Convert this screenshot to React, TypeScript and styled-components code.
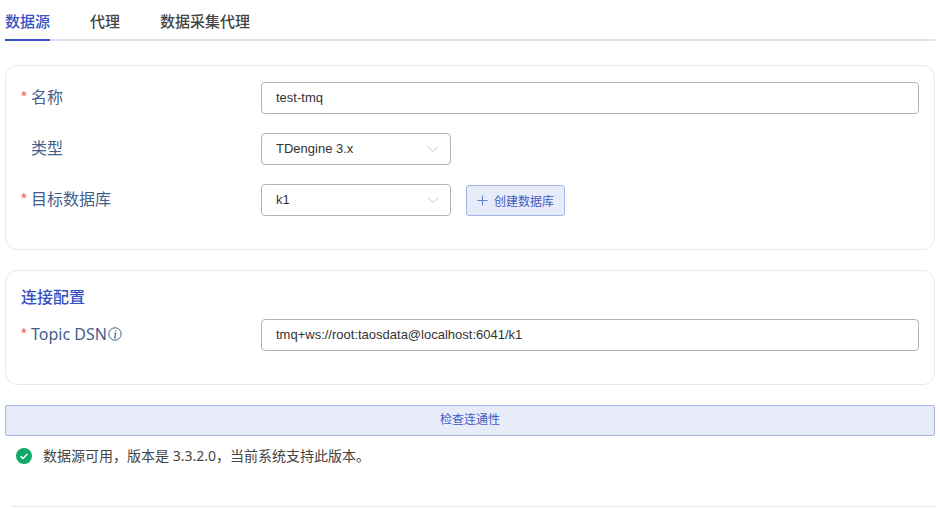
import React from 'react';
import styled, { createGlobalStyle } from 'styled-components';

const GlobalStyle = createGlobalStyle`
	html, body {
		margin: 0;
		padding: 0;
		background: #fff;
		overflow: hidden;
	}
	* {
		box-sizing: border-box;
	}
`;

const tabs = ['数据源', '代理', '数据采集代理'];

const Chevron: React.FC = () => (
	<ChevronIcon viewBox="0 0 12 12" fill="none">
		<path d="M1 3.5 6 8.5 11 3.5" stroke="#c4c4c4" strokeWidth="1" />
	</ChevronIcon>
);

const App: React.FC = () => {
	return (
		<Page>
			<GlobalStyle />
			<TabBar>
				{tabs.map((t, i) => (
					<Tab key={t} $active={i === 0}>
						{t}
					</Tab>
				))}
			</TabBar>

			<Card $height={185} $top={24}>
				<Row>
					<Label $required>名称</Label>
					<Input>test-tmq</Input>
				</Row>
				<Row>
					<Label>类型</Label>
					<Select>
						TDengine 3.x
						<Chevron />
					</Select>
				</Row>
				<Row>
					<Label $required>目标数据库</Label>
					<Select>
						k1
						<Chevron />
					</Select>
					<CreateButton>
						<svg width="11" height="11" viewBox="0 0 11 11" fill="none">
							<path d="M5.5 0.5v10M0.5 5.5h10" stroke="#5f78cf" strokeWidth="1" />
						</svg>
						创建数据库
					</CreateButton>
				</Row>
			</Card>

			<Card $height={115} $top={20}>
				<SectionTitle>连接配置</SectionTitle>
				<Row>
					<Label $required $latin>
						Topic DSN
						<InfoIcon viewBox="0 0 14 14" fill="none">
							<circle cx="7" cy="7" r="6.2" stroke="#44608a" strokeWidth="1" />
							<path d="M8 3.2v1.2M6.4 6.2h1.3L6.6 10.6h1.3" stroke="#44608a" strokeWidth="1.1" />
						</InfoIcon>
					</Label>
					<Input>tmq+ws://root:taosdata@localhost:6041/k1</Input>
				</Row>
			</Card>

			<CheckButton>检查连通性</CheckButton>

			<Status>
				<svg width="16" height="16" viewBox="0 0 16 16">
					<circle cx="8" cy="8" r="8" fill="#12a866" />
					<path d="M4.6 8.2 7 10.4 11.4 5.9" stroke="#fff" strokeWidth="1.5" fill="none" />
				</svg>
				<StatusText>数据源可用，版本是 3.3.2.0，当前系统支持此版本。</StatusText>
			</Status>

			<BottomRule />
		</Page>
	);
};

const Page = styled.div`
	width: 940px;
	height: 508px;
	overflow: hidden;
	padding: 0 5px;
	font-family: 'Liberation Sans', 'Noto Sans CJK SC', sans-serif;
`;

const TabBar = styled.div`
	display: flex;
	gap: 40px;
	height: 41px;
	border-bottom: 2px solid #dde1ec;
`;

const Tab = styled.div<{ $active?: boolean }>`
	height: 41px;
	line-height: 44px;
	font-size: 15px;
	font-weight: 500;
	color: ${p => (p.$active ? '#3551c4' : '#444')};
	border-bottom: 2px solid ${p => (p.$active ? '#3551c4' : 'transparent')};
`;

const Card = styled.div<{ $height: number; $top: number }>`
	height: ${p => p.$height}px;
	margin-top: ${p => p.$top}px;
	border: 1px solid #e8e8e8;
	border-radius: 12px;
	padding: 16px 15px 0;
	display: flex;
	flex-direction: column;
	gap: 19px;
`;

const Row = styled.div`
	display: flex;
	align-items: center;
	height: 32px;
`;

const Label = styled.div<{ $required?: boolean; $latin?: boolean }>`
	position: relative;
	flex: 0 0 240px;
	height: 32px;
	padding: 0 0 ${p => (p.$latin ? '2px' : '4px')} 10px;
	font-family: 'Noto Sans', 'Noto Sans CJK SC', sans-serif;
	font-size: 16px;
	color: #44608a;
	display: flex;
	align-items: center;
	&::before {
		content: ${p => (p.$required ? "'*'" : 'none')};
		position: absolute;
		left: 0;
		top: 5px;
		font-family: 'Liberation Sans', sans-serif;
		color: #f5484a;
		font-size: 15px;
	}
`;

const Input = styled.div`
	flex: 1;
	height: 32px;
	line-height: 30px;
	padding: 0 14px;
	border: 1px solid #b3b3b3;
	border-radius: 4px;
	font-size: 13px;
	color: #333;
`;

const Select = styled(Input)`
	flex: 0 0 190px;
	display: flex;
	align-items: center;
	justify-content: space-between;
	padding-right: 11px;
`;

const ChevronIcon = styled.svg`
	width: 12px;
	height: 12px;
`;

const InfoIcon = styled.svg`
	width: 14px;
	height: 14px;
	margin-left: 1px;
`;

const CreateButton = styled.div`
	margin-left: 15px;
	width: 99px;
	height: 31px;
	display: flex;
	align-items: center;
	justify-content: center;
	gap: 6px;
	background: #e8ecf8;
	border: 1px solid #a3b5e8;
	border-radius: 3px;
	font-size: 12px;
	color: #3f5bc4;
`;

const SectionTitle = styled.div`
	font-size: 16px;
	font-weight: 500;
	line-height: 22px;
	color: #3551c4;
	margin-bottom: -9px;
`;

const CheckButton = styled.div`
	height: 31px;
	line-height: 29px;
	margin-top: 20px;
	text-align: center;
	background: #e8ecf8;
	border: 1px solid #a3b5e8;
	border-radius: 2px;
	font-size: 12px;
	color: #3f5bc4;
`;

const Status = styled.div`
	display: flex;
	align-items: center;
	gap: 11px;
	height: 20px;
	margin: 10px 0 0 11px;
	font-family: 'Noto Sans', 'Noto Sans CJK SC', sans-serif;
	font-size: 14px;
	color: #444;
`;

const StatusText = styled.span`
	padding-bottom: 3px;
`;

const BottomRule = styled.div`
	margin: 40px 0 0 6px;
	border-top: 1px solid #e8e8e8;
`;

export default App;
